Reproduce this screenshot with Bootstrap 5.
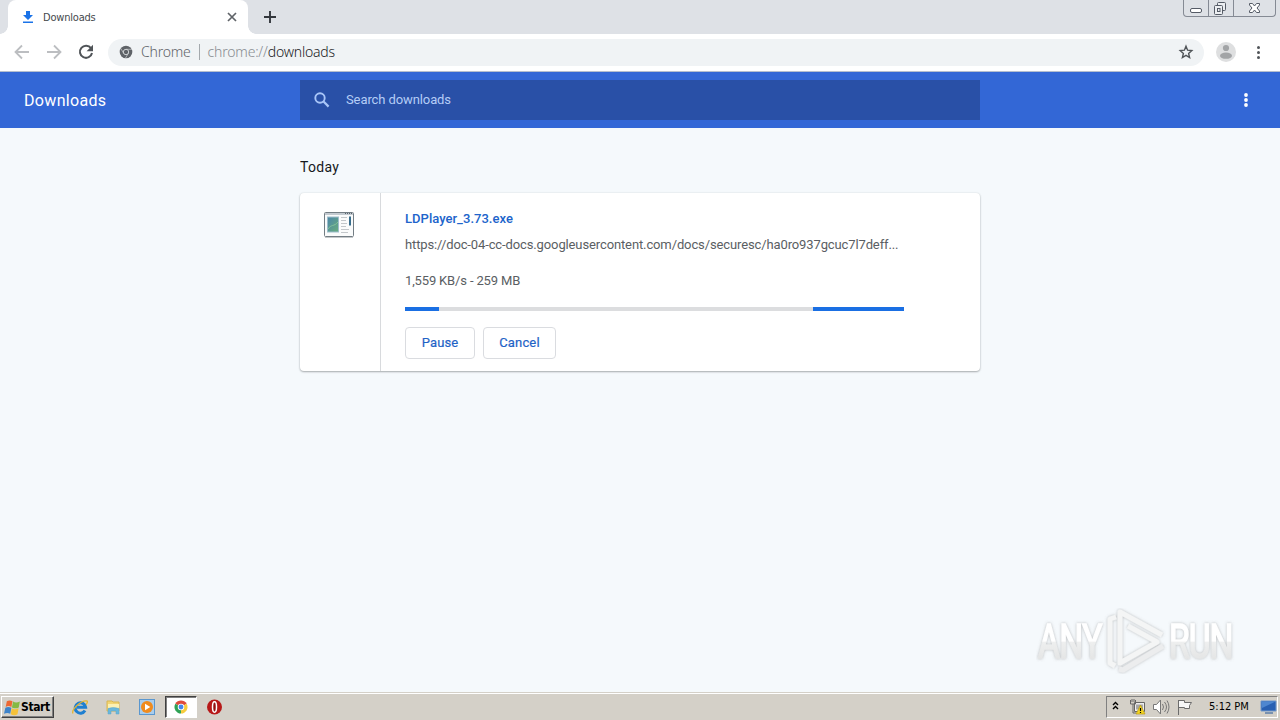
<!DOCTYPE html>
<html lang="en">
<head>
  <meta charset="UTF-8">
  <meta name="viewport" content="width=device-width, initial-scale=1.0">
  <title>Downloads</title>
  <link href="https://cdn.jsdelivr.net/npm/bootstrap@5.3.3/dist/css/bootstrap.min.css" rel="stylesheet">
  <style>
    body {
      height: 720px;
      background: #f5f9fc;
      font-family: Roboto, "Liberation Sans", sans-serif;
      font-size: 13px;
      line-height: 20px;
      color: #5a5e63;
    }
    svg { display: block; flex-shrink: 0; }
    .ui-font { font-family: "DejaVu Sans Condensed", "DejaVu Sans", sans-serif; }

    /* browser window */
    .tab-strip { height: 34px; background: #dee1e6; padding-left: 8px; }
    .browser-tab {
      width: 240px; height: 34px; background: #fff; border-radius: 8px 8px 0 0;
      padding: 0 10px 0 14px; font-size: 11px; color: #45494d;
    }
    .browser-tab::before, .browser-tab::after {
      content: ""; position: absolute; bottom: 0; width: 8px; height: 8px;
    }
    .browser-tab::before { left: -8px; background: radial-gradient(circle at 0 0, #dee1e6 7.5px, #fff 8px); }
    .browser-tab::after { right: -8px; background: radial-gradient(circle at 100% 0, #dee1e6 7.5px, #fff 8px); }
    .tab-title { padding: 1px 0 0 9px; letter-spacing: -.2px; }
    .window-buttons { width: 93px; height: 17px; border: 1px solid #858a94; border-top: 0; border-radius: 0 0 4px 4px; margin-right: 4px; }
    .window-buttons > div + div { border-left: 1px solid #858a94; }
    .toolbar { height: 38px; border-bottom: 1px solid #b5bfce; padding: 0 12px 1px; }
    .omnibox { height: 27px; border-radius: 14px; background: #f0f3f5; margin-left: 12px; padding: 0 10px 0 11px; }
    .omnibox-text { font-family: "Noto Sans", sans-serif; font-size: 14px; font-weight: 300; color: #5f6368; letter-spacing: -.2px; }
    .omnibox-divider { width: 1px; height: 16px; background: #a4a9ad; margin: 0 8px; }

    /* downloads page */
    .page-header { height: 56px; background: #3367d6; }
    .page-title { width: 300px; padding: 2px 0 0 24px; font-size: 16px; letter-spacing: .33px; }
    .search-box { width: 680px; height: 40px; background: #2950a7; color: #b5cdf6; padding-left: 11px; letter-spacing: -.1px; }
    .downloads-list { width: 680px; margin: 0 auto; padding-top: 28px; }
    .date-label { font-size: 14px; color: #16191d; line-height: 22px; letter-spacing: .3px; margin-bottom: 15px; }
    .download-item { height: 178px; border-radius: 4px; background: #fff; box-shadow: 0 1px 2px rgba(60, 64, 67, .4), 0 0 2px rgba(60, 64, 67, .12); }
    .file-icon { width: 81px; border-right: 1px solid #d8dadd; padding: 18px 0 0 23px; }
    .file-info { padding: 16px 76px 0 24px; width: 599px; }
    .file-name { font-weight: 500; color: #2064cb; letter-spacing: .03px; }
    .file-url { margin-top: 6px; white-space: nowrap; letter-spacing: -.12px; }
    .progress-line { height: 4px; width: 499px; background: #dcdddf; margin-top: 16px; }
    .progress-line div { background: #1a6fe3; }
    .action-btn {
      height: 32px; padding: 0; border: 1px solid #dadce0; border-radius: 4px;
      font-size: 13px; line-height: 30px; color: #1f63c6; background: #fff; letter-spacing: .15px;
      -webkit-text-stroke: .2px #1f63c6;
    }

    /* desktop */
    .watermark { right: 44px; bottom: 18px; }
    .taskbar { height: 28px; background: #d4d0c8; border-top: 1px solid #d4d0c8; box-shadow: inset 0 1px #fff; color: #000; }
    .start-button {
      width: 53px; height: 22px; margin: 3px 0 0 1px; padding-left: 2px; font: bold 12px/18px "DejaVu Sans Condensed", sans-serif;
      border: 1px solid; border-color: #fff #404040 #404040 #fff; box-shadow: inset -1px -1px #808080; letter-spacing: -.4px;
    }
    .task-active { width: 32px; height: 22px; background: #fff; border: 1px solid; border-color: #404040 #fff #fff #404040; box-shadow: inset 1px 1px #808080; }
    .tray { width: 172px; height: 22px; margin: 3px 2px 0 0; border: 1px solid; border-color: #808080 #fff #fff #808080; font-size: 11px; }
  </style>
</head>
<body class="d-flex flex-column overflow-hidden">

  <!-- tabs -->
  <div class="tab-strip d-flex">
    <div class="browser-tab ui-font position-relative d-flex align-items-center">
      <svg width="12" height="14" viewBox="0 0 12 14"><path d="M4 1h4v4h3L6 10 1 5h3z" fill="#1a73e8"/><path d="M1 11.5h10V13H1z" fill="#1a73e8"/></svg>
      <span class="tab-title flex-grow-1">Downloads</span>
      <svg width="12" height="12" viewBox="0 0 12 12"><path d="M2 2l8 8M10 2l-8 8" stroke="#5f6368" stroke-width="1.7"/></svg>
    </div>
    <svg class="mt-2" style="margin-left:13px" width="18" height="18" viewBox="0 0 18 18"><path d="M9 3v12M3 9h12" stroke="#33373d" stroke-width="1.9"/></svg>
    <div class="window-buttons d-flex ms-auto">
      <div style="width:24px"><svg width="24" height="16" viewBox="0 0 24 16"><rect x="6.500" y="8.500" width="11" height="4" rx="1.500" fill="#fff" stroke="#555b66"/></svg></div>
      <div style="width:25px"><svg width="24" height="16" viewBox="0 0 24 16"><g fill="#eceef1" stroke="#555b66"><rect x="8.500" y="2.500" width="8" height="8" rx="1"/><rect x="5.500" y="5.500" width="8" height="9" rx="1"/><rect x="8.500" y="8.500" width="2.500" height="3"/></g></svg></div>
      <div class="flex-grow-1"><svg width="41" height="16" viewBox="0 0 41 16"><path d="M15.500 3.500h3l2 2.500 2-2.500h3v1.500L23 8l2.500 3v1.500h-3l-2-2.500-2 2.500h-3V11L18 8l-2.500-3z" fill="#fff" stroke="#555b66"/></svg></div>
    </div>
  </div>

  <!-- toolbar -->
  <div class="toolbar d-flex align-items-center bg-white">
    <svg width="20" height="20" viewBox="0 0 20 20"><path d="M17 10H4M10 3.500L3.500 10l6.500 6.500" fill="none" stroke="#bcbec1" stroke-width="1.8"/></svg>
    <svg style="margin-left:12px" width="20" height="20" viewBox="0 0 20 20"><path d="M3 10h13M10 3.500l6.500 6.500-6.500 6.500" fill="none" stroke="#bcbec1" stroke-width="1.8"/></svg>
    <svg style="margin-left:12px" width="20" height="20" viewBox="0 0 20 20"><path d="M15 6.200A6.100 6.100 0 1 0 16 11" fill="none" stroke="#505458" stroke-width="2"/><path d="M17 2.800v6.400h-6.400z" fill="#505458"/></svg>
    <div class="omnibox flex-grow-1 d-flex align-items-center">
      <svg width="14" height="14" viewBox="0 0 14 14"><circle cx="7" cy="7" r="6.300" fill="#5f6368"/><circle cx="7" cy="7" r="2.700" fill="#5f6368" stroke="#cdd0d2"/><path d="M7 4.300h6M4.700 8.400L1.800 3.500M9.300 8.400l-3 5" stroke="#cdd0d2" stroke-width=".7"/></svg>
      <span class="omnibox-text" style="margin-left:8px">Chrome</span>
      <span class="omnibox-divider"></span>
      <span class="omnibox-text flex-grow-1" style="color:#888c91">chrome://<span style="color:#202124">downloads</span></span>
      <svg width="16" height="16" viewBox="0 0 16 16"><path d="M8 2.200l1.600 4 4.200.4-3.200 2.800 1 4.200L8 11.400l-3.600 2.200 1-4.200-3.200-2.800 4.200-.4z" fill="none" stroke="#505458" stroke-width="1.400"/></svg>
    </div>
    <svg style="margin-left:12px" width="20" height="20" viewBox="0 0 20 20"><circle cx="10" cy="10" r="10" fill="#dedfe0"/><circle cx="10" cy="6" r="3.100" fill="#a2a4a6"/><ellipse cx="10" cy="13.700" rx="6" ry="3.100" fill="#a2a4a6"/></svg>
    <svg style="margin-left:12px" width="20" height="20" viewBox="0 0 20 20"><g fill="#505458"><circle cx="10.500" cy="5.500" r="1.500"/><circle cx="10.500" cy="10.500" r="1.500"/><circle cx="10.500" cy="15.500" r="1.500"/></g></svg>
  </div>

  <!-- page header -->
  <header class="page-header d-flex align-items-center">
    <div class="page-title text-white">Downloads</div>
    <div class="search-box d-flex align-items-center">
      <svg width="22" height="22" viewBox="0 0 22 22"><circle cx="9" cy="9" r="4.700" fill="none" stroke="#a9c6f8" stroke-width="1.900"/><path d="M12.300 12.300l5.300 5.300" stroke="#a9c6f8" stroke-width="2.200"/></svg>
      <span style="margin-left:13px">Search downloads</span>
    </div>
    <svg class="ms-auto" style="margin-right:24px" width="20" height="20" viewBox="0 0 20 20"><g fill="#fff"><circle cx="10" cy="5" r="1.900"/><circle cx="10" cy="10" r="1.900"/><circle cx="10" cy="15" r="1.900"/></g></svg>
  </header>

  <!-- downloads list -->
  <main class="flex-grow-1 position-relative">
    <div class="downloads-list">
      <div class="date-label">Today</div>
      <div class="download-item d-flex">
        <div class="file-icon">
          <svg width="32" height="28" viewBox="0 0 32 28">
            <defs><linearGradient id="exe" x2="1" y2="1"><stop stop-color="#4b86a8"/><stop offset="1" stop-color="#69ad7d"/></linearGradient></defs>
            <rect x="1.500" y="1.500" width="29" height="24" rx="1" fill="#fafbfb" stroke="#737d84"/>
            <path d="M2 3h28" stroke="#c3cad0" stroke-width="2"/><path d="M22 2.500h7" stroke="#58636c" stroke-dasharray="1 1"/>
            <rect x="4.500" y="6" width="11" height="15" fill="url(#exe)" stroke="#9dbdcc"/>
            <path d="M5 18c3-5 6-2 10-7" stroke="#85c29a" fill="none"/>
            <path d="M18 6.500h6M18 9.500h5M18 12.500h6M18 15.500h5M18 18.500h8M18 21.500h7" stroke="#c3c7ca"/>
            <path d="M27 5.500v9" stroke="#376d8c" stroke-width="2"/><path d="M2 26.500h28" stroke="#c5c8ca"/>
          </svg>
        </div>
        <div class="file-info">
          <div class="file-name">LDPlayer_3.73.exe</div>
          <div class="file-url">https://doc-04-cc-docs.googleusercontent.com/docs/securesc/ha0ro937gcuc7l7deff...</div>
          <div style="margin-top:16px;letter-spacing:-.15px">1,559 KB/s - 259 MB</div>
          <div class="progress-line d-flex justify-content-between">
            <div style="width:34px"></div>
            <div style="width:91px"></div>
          </div>
          <div class="d-flex gap-2" style="margin-top:16px">
            <button type="button" class="action-btn" style="width:70px">Pause</button>
            <button type="button" class="action-btn" style="width:73px">Cancel</button>
          </div>
        </div>
      </div>
    </div>

    <svg class="watermark position-absolute" width="200" height="66" viewBox="0 0 200 66">
      <defs>
        <linearGradient id="fade" gradientUnits="userSpaceOnUse" x1="0" y1="-34" x2="0" y2="0"><stop offset=".5" stop-color="#fff"/><stop offset=".54" stop-color="#eeefef"/><stop offset="1" stop-color="#e5e6e6"/></linearGradient>
        <filter id="glow" x="-10%" y="-20%" width="120%" height="140%"><feDropShadow dx="0" dy="0" stdDeviation="1.800" flood-color="#777" flood-opacity=".5"/></filter>
      </defs>
      <g filter="url(#glow)">
        <g fill="url(#fade)" stroke="url(#fade)" stroke-width="1.600" font-family="Roboto, sans-serif" font-size="48">
          <text transform="translate(2 50) scale(.7 1)" textLength="92">ANY</text>
          <text transform="translate(133 50) scale(.7 1)" textLength="92">RUN</text>
        </g>
        <g fill="none" stroke="#f4f5f5" stroke-width="5" stroke-linejoin="round">
          <path d="M80 9l-6 2v44l5 3"/>
          <path d="M126 27L84 4v51l37-21L92 18"/>
          <path d="M83 61l4 1 40-24" stroke="#ecedee"/>
        </g>
      </g>
    </svg>
  </main>

  <!-- taskbar -->
  <footer class="taskbar ui-font d-flex">
    <div class="start-button d-flex align-items-center">
      <svg width="17" height="17" viewBox="0 0 15 15"><path d="M2.500 2q2.500-1.500 5 0L6.500 7q-2.500-1.500-5 0z" fill="#ed6833"/><path d="M8 2.300q2.500 1.500 6 0L13 7.500q-2.500 1.500-6 0z" fill="#84b944"/><path d="M1.200 7.700q2.500-1.500 5.300 0L5.500 13q-2.500-1.500-5.500 0z" fill="#3e83c9"/><path d="M6.900 8.200q2.500 1.500 6 0l-1 5.300q-2.500 1.500-6 0z" fill="#f5c23b"/></svg>
      <span>Start</span>
    </div>
    <div class="d-flex align-items-center" style="margin:3px 0 0 18px;height:22px">
      <svg width="16" height="16" viewBox="0 0 16 16"><path d="M13 11.500a5.200 5.200 0 1 1 .6-3.200H5" fill="none" stroke="#1f7fd0" stroke-width="3"/><path d="M1 14.500C-1 11 9 1 15 2c1 .5 0 2.500-1 3.500" fill="none" stroke="#e3b534" stroke-width="1.300"/></svg>
      <svg style="margin-left:17px" width="17" height="17" viewBox="0 0 17 17"><path d="M2 2h5l1 1h6v9H2z" fill="#f2d573" stroke="#d8b653"/><path d="M3 5h11v6H3z" fill="#fbf0b4"/><path d="M3 15V9.500q5-2 11 0V15h-3v-3H6v3z" fill="#69b7dc" stroke="#58a4c8" stroke-width=".5"/></svg>
      <svg style="margin-left:17px" width="16" height="16" viewBox="0 0 16 16"><rect x=".5" y=".5" width="15" height="15" fill="#a9cdec" stroke="#5a97cf"/><circle cx="8" cy="8" r="6" fill="#f08b1d"/><path d="M6 4.700v6.600L11.300 8z" fill="#fff"/></svg>
    </div>
    <div class="task-active d-flex align-items-center justify-content-center" style="margin:3px 0 0 10px">
      <svg width="14" height="14" viewBox="0 0 15 15"><path d="M7.500 7.500L1.440 4A7 7 0 0 1 13.560 4z" fill="#df4b3c"/><path d="M7.500 7.500V14.500A7 7 0 0 1 1.440 4z" fill="#2fa255"/><path d="M7.500 7.500L13.560 4A7 7 0 0 1 7.500 14.500z" fill="#f6cc3e"/><circle cx="7.500" cy="7.500" r="3.500" fill="#fff"/><circle cx="7.500" cy="7.500" r="2.600" fill="#4386ed"/></svg>
    </div>
    <svg style="margin:6px 0 0 9px" width="16" height="16" viewBox="0 0 16 16"><ellipse cx="8.500" cy="8" rx="7.500" ry="7.600" fill="#b71818"/><ellipse cx="8.500" cy="8" rx="2" ry="5.200" fill="#941010" stroke="#fff" stroke-width="1.500"/></svg>

    <div class="tray ms-auto d-flex align-items-center">
      <svg width="18" height="20" viewBox="0 0 18 20"><path d="M6 8l2.500-2.500L11 8M6 12l2.500-2.500L11 12" fill="none" stroke="#000" stroke-width="1.400"/></svg>
      <svg style="margin-left:4px" width="17" height="18" viewBox="0 0 17 18"><path d="M5.500 4.500h10v9h-10z" fill="#eee" stroke="#666"/><path d="M7 6.500h7v5H7z" fill="#a8a8a8"/><path d="M1.500 2v4h5V2M3 1v3M5 1v3M4 6v9h3" fill="none" stroke="#666"/><path d="M11.500 7l4.500 9H7z" fill="#f3d421" stroke="#b99817" stroke-width=".7"/><path d="M11.500 10v3M11.500 14v1" stroke="#000" stroke-width="1.200"/></svg>
      <svg style="margin-left:6px" width="18" height="18" viewBox="0 0 18 18"><path d="M1.500 6.500h3L8.500 2v14l-4-4.500h-3z" fill="#fff" stroke="#777"/><path d="M10.500 6q2 3 0 6M12.500 4q4 5 0 10M15 2.500q4 6.500 0 13" fill="none" stroke="#777"/></svg>
      <svg style="margin-left:6px" width="18" height="18" viewBox="0 0 18 18"><path d="M2.500 2v15M2.500 2.500h6v2h7l-2 3v3h-5v-1h-6" fill="#f7f7f7" stroke="#6c6c6c"/></svg>
      <span style="margin-left:15px">5:12 PM</span>
      <svg class="ms-auto" width="17" height="15" viewBox="0 0 17 15"><path d="M1 1h15v10H1z" fill="#2960b2" stroke="#7599ca"/><path d="M1.500 1.500h14L2 8z" fill="#4f87d0"/><path d="M5 13h8" stroke="#5c7ea8" stroke-width="1.500"/></svg>
    </div>
  </footer>

  <script src="https://cdn.jsdelivr.net/npm/bootstrap@5.3.3/dist/js/bootstrap.bundle.min.js"></script>
</body>
</html>
